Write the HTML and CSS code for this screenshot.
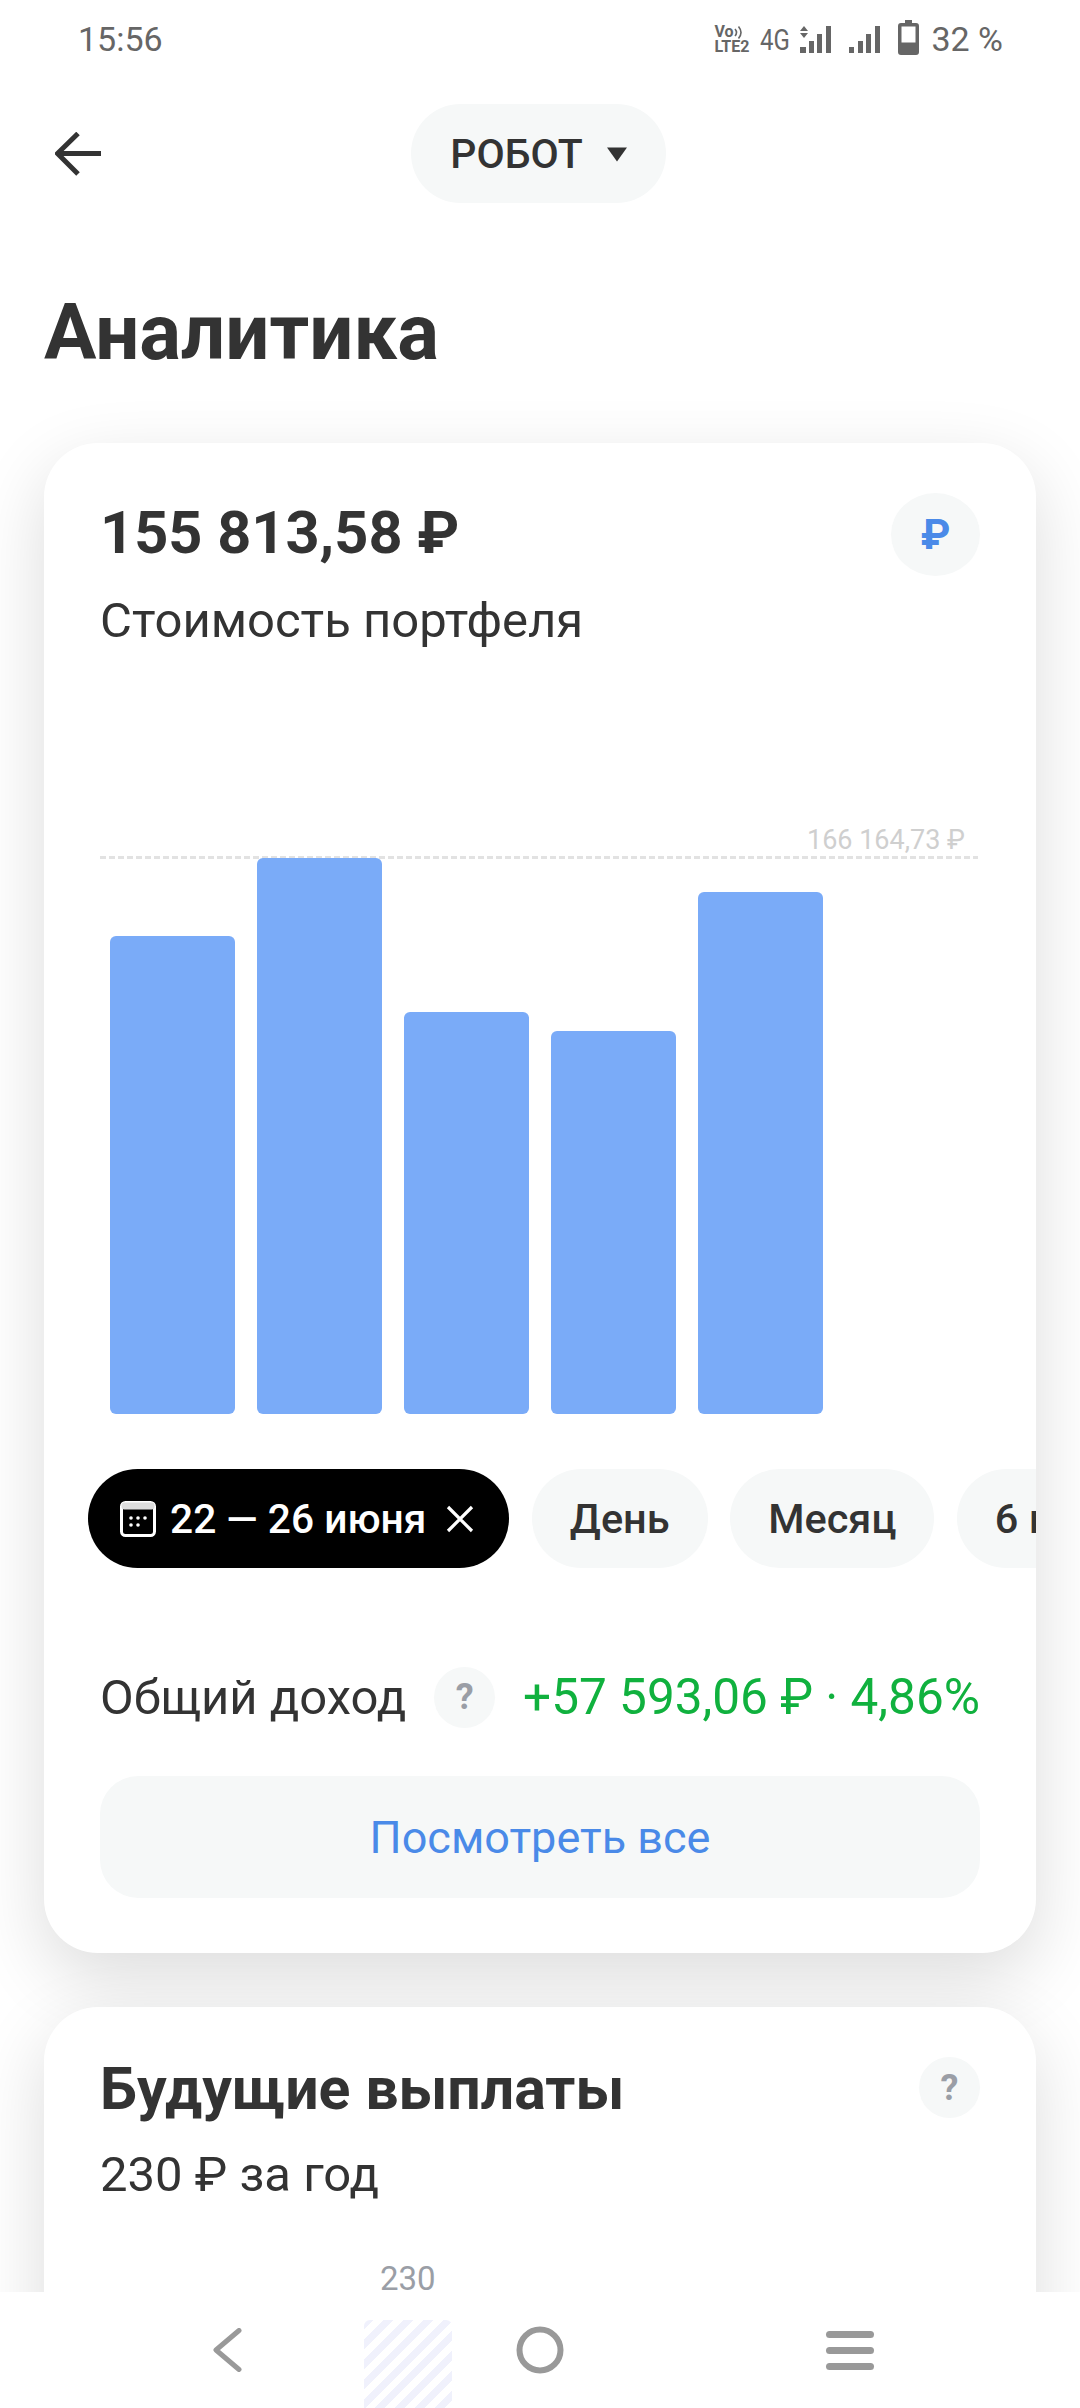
FILE: index.html
```html
<!DOCTYPE html>
<html lang="ru">
<head>
<meta charset="utf-8">
<title>Аналитика</title>
<link rel="stylesheet" href="styles.css">
</head>
<body>
<div class="screen">
  <header class="status">
    <span class="time">15:56</span>
    <div class="status-right">
      <div class="volte"><span class="vo">Vo<svg class="waves" width="9" height="15" viewBox="0 0 9 15"><path d="M1 4q3 3.500 0 7M4.500 1.500q5 6 0 12" fill="none" stroke="#666" stroke-width="1.600"/></svg></span><span class="lte">LTE2</span></div>
      <span class="net">4G</span>
      <svg class="sig1" width="32" height="27" viewBox="0 0 32 27"><path d="M4 0l4 5H0zM4 12L0 7h8z" fill="#666"/><path d="M0 21h6v6H0zM9 15h5v12H9zM17 8h5v19h-5zM26 0h5v27h-5z" fill="#666"/></svg>
      <svg class="sig2" width="31" height="27" viewBox="0 0 31 27"><path d="M0 21h5v6H0zM9 15h5v12H9zM17 8h5v19h-5zM26 0h5v27h-5z" fill="#666"/></svg>
      <svg class="batt" width="21" height="35" viewBox="0 0 21 35"><path d="M7 0h7v3h4a3 3 0 0 1 3 3v26a3 3 0 0 1-3 3H3a3 3 0 0 1-3-3V6a3 3 0 0 1 3-3h4z" fill="#666"/><rect x="3.500" y="6.500" width="14" height="16" fill="#fff"/></svg>
      <span class="pct">32 %</span>
    </div>
  </header>

  <nav class="topbar">
    <svg class="back" width="46" height="44" viewBox="0 0 46 44"><path d="M46 21.500H4M23 1.500L2.500 21.500 23 42" fill="none" stroke="#333" stroke-width="5"/></svg>
    <div class="pill"><span>РОБОТ</span><svg width="20" height="16" viewBox="0 0 20 16"><path d="M0 1.500h20L10 15.500z" fill="#333"/></svg></div>
  </nav>

  <h1 class="title">Аналитика</h1>

  <section class="card card-main">
    <div class="head">
      <div>
        <div class="amount">155 813,58 ₽</div>
        <div class="sub">Стоимость портфеля</div>
      </div>
      <div class="currency">₽</div>
    </div>
    <div class="chart">
      <div class="max"><span class="max-label">166 164,73 ₽</span></div>
      <div class="bars">
        <div class="bar" style="height:478px"></div>
        <div class="bar" style="height:556px"></div>
        <div class="bar" style="height:402px"></div>
        <div class="bar" style="height:383px"></div>
        <div class="bar" style="height:522px"></div>
      </div>
    </div>
    <div class="chips">
      <div class="chip chip-active">
        <svg class="cal" width="36" height="36" viewBox="0 0 36 36"><rect x="1.500" y="1.500" width="33" height="33" rx="4" fill="none" stroke="#fff" stroke-width="3"/><rect x="1.500" y="1.500" width="33" height="7" rx="3" fill="#ddd"/><g fill="#fff"><circle cx="11" cy="17" r="1.800"/><circle cx="18" cy="17" r="1.800"/><circle cx="25" cy="17" r="1.800"/><circle cx="11" cy="24" r="1.800"/><circle cx="18" cy="24" r="1.800"/></g></svg>
        <span>22 — 26 июня</span>
        <svg class="close" width="28" height="28" viewBox="0 0 28 28"><path d="M2 2l24 24M26 2L2 26" stroke="#fff" stroke-width="3.200" fill="none"/></svg>
      </div>
      <div class="chip">День</div>
      <div class="chip">Месяц</div>
      <div class="chip">6 месяцев</div>
    </div>
    <div class="income">
      <span class="income-label">Общий доход</span>
      <span class="hint">?</span>
      <span class="income-value">+57 593,06 ₽ · 4,86%</span>
    </div>
    <div class="more">Посмотреть все</div>
  </section>

  <section class="card card-next">
    <div class="head">
      <div class="next-title">Будущие выплаты</div>
      <span class="hint">?</span>
    </div>
    <div class="sub sub-next">230 ₽ за год</div>
    <div class="tick">230</div>
  </section>

  <footer class="sysnav">
    <div class="hatch"></div>
    <svg width="30" height="44" viewBox="0 0 30 44"><path d="M27 2.500L4 22l23 19.500" fill="none" stroke="#999" stroke-width="5" stroke-linecap="round" stroke-linejoin="round"/></svg>
    <svg class="home" width="48" height="48" viewBox="0 0 48 48"><circle cx="24" cy="24" r="20.500" fill="none" stroke="#999" stroke-width="6"/></svg>
    <div class="burger"><i></i><i></i><i></i></div>
  </footer>
</div>
</body>
</html>
```

FILE: styles.css
```css
* { box-sizing: border-box; }
html, body { margin: 0; padding: 0; background: #fff; }
.screen {
  position: relative;
  width: 1080px;
  height: 2408px;
  overflow: hidden;
  font-family: Roboto, "Noto Sans", sans-serif;
  color: #333;
  background: #fff;
}
.status {
  height: 78px;
  padding: 0 77px 0 78px;
  display: flex;
  justify-content: space-between;
  align-items: center;
  color: #666;
}
.time { font-size: 34px; }
.status-right { display: flex; align-items: center; }
.volte { width: 38px; display: flex; flex-direction: column; font-weight: 700; color: #666; }
.vo { font-size: 16px; line-height: 14px; display: flex; align-items: center; }
.lte { font-size: 16px; line-height: 14px; }
.net { font-size: 30px; margin-left: 8px; transform: scaleX(.8); transform-origin: left center; width: 32px; }
.sig1 { margin-left: 8px; }
.sig2 { margin-left: 17px; }
.batt { margin-left: 18px; margin-top: -4px; }
.pct { font-size: 34px; margin-left: 12px; }

.topbar {
  height: 99px;
  margin-top: 26px;
  padding-left: 55px;
  display: flex;
  align-items: center;
}
.back { flex: none; }
.pill {
  margin-left: 310px;
  width: 255px;
  height: 99px;
  border-radius: 50px;
  background: #f6f8f8;
  display: flex;
  align-items: center;
  justify-content: center;
  gap: 24px;
  font-size: 41px;
  font-weight: 500;
}
.title {
  margin: 82px 0 0 44px;
  font-size: 78px;
  line-height: 96px;
  font-weight: 700;
}

.card {
  margin: 0 44px;
  padding: 0 56px;
  background: #fff;
  border-radius: 54px;
  box-shadow: 0 24px 72px rgba(0, 0, 0, .14);
}
.card-main { margin-top: 62px; height: 1510px; padding-top: 56px; overflow: hidden; }
.card-next { margin-top: 54px; height: 400px; padding-top: 46px; }
.head { display: flex; justify-content: space-between; align-items: flex-start; }
.amount { font-size: 59.500px; font-weight: 700; line-height: 72px; margin-top: -2px; }
.sub { font-size: 49px; line-height: 60px; margin-top: 22px; }
.currency {
  width: 89px;
  height: 83px;
  margin-top: -6px;
  border-radius: 50%;
  background: #f6f8f8;
  color: #4a8ae8;
  font-size: 42px;
  font-weight: 700;
  display: flex;
  align-items: center;
  justify-content: center;
}
.chart { margin-top: 206px; position: relative; }
.max {
  height: 3px;
  width: 878px;
  margin-top: -1px;
  background: repeating-linear-gradient(90deg, #e2e2e2 0 6px, transparent 6px 9px);
  position: relative;
}
.max-label {
  position: absolute;
  right: 13px;
  bottom: 1px;
  font-size: 27px;
  line-height: 36px;
  color: #cfcfcf;
}
.bars { height: 555px; padding-left: 10px; display: flex; gap: 22px; align-items: flex-end; }
.bar { width: 125px; background: #7aabf8; border-radius: 6px; flex: none; position: relative; }
.chips {
  display: flex;
  gap: 22.500px;
  margin: 55px -56px 0 -12px;
  overflow: hidden;
}
.chip {
  flex: none;
  height: 99px;
  padding: 0 38px;
  border-radius: 50px;
  background: #f6f8f8;
  display: flex;
  align-items: center;
  font-size: 41.500px;
  font-weight: 500;
}
.chip-active { background: #000; color: #fff; padding: 0 35px 0 32px; gap: 14px; font-size: 40.700px; }
.close { margin-left: 6px; }
.income { display: flex; align-items: center; margin-top: 98px; height: 62px; }
.income-label { font-size: 49px; }
.hint {
  flex: none;
  width: 61px;
  height: 61px;
  border-radius: 50%;
  background: #f6f8f8;
  color: #9a9ea6;
  font-size: 36px;
  font-weight: 700;
  display: flex;
  align-items: center;
  justify-content: center;
}
.income .hint { margin-left: 28px; }
.income-value { margin-left: auto; font-size: 49.500px; color: #10b13e; }
.more {
  margin-top: 48px;
  height: 122px;
  border-radius: 38px;
  background: #f6f8f8;
  color: #4a8ae8;
  font-size: 45px;
  display: flex;
  align-items: center;
  justify-content: center;
}
.next-title { font-size: 59px; font-weight: 700; line-height: 72px; }
.card-next .hint { margin-top: 4px; }
.sub-next { margin-top: 20px; }
.tick { margin: 54px 0 0 280px; width: 57px; font-size: 33px; line-height: 40px; color: #9a9ea6; }

.sysnav {
  position: absolute;
  left: 0;
  right: 0;
  bottom: 0;
  height: 116px;
  background: #fff;
  display: flex;
  align-items: center;
  padding: 0 206px 0 212px;
  justify-content: space-between;
}
.home { margin-left: 12px; }
.hatch {
  position: absolute;
  left: 364px;
  bottom: 0;
  width: 88px;
  height: 88px;
  border-radius: 6px 6px 0 0;
  background: repeating-linear-gradient(135deg, #f0f1fc 0 7px, #fff 7px 14px);
}
.burger { width: 48px; display: flex; flex-direction: column; gap: 9px; }
.burger i { display: block; height: 7px; border-radius: 4px; background: #999; }
```
